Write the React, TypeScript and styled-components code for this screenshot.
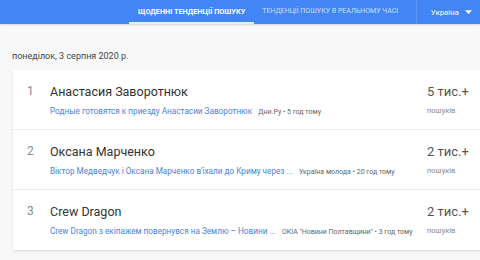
import styled, { createGlobalStyle } from "styled-components";

const GlobalStyle = createGlobalStyle`
    body {
        margin: 0;
        background: #f8f8f8;
        font-family: Roboto, "Noto Sans", Arial, sans-serif;
        overflow: hidden;
    }
`;

const items = [
    {
        rank: 1,
        title: "Анастасия Заворотнюк",
        article: "Родные готовятся к приезду Анастасии Заворотнюк",
        source: "Дни.Ру • 5 год тому",
        count: "5 тис.+",
    },
    {
        rank: 2,
        title: "Оксана Марченко",
        article: "Віктор Медведчук і Оксана Марченко в'їхали до Криму через ...",
        source: "Україна молода • 20 год тому",
        count: "2 тис.+",
    },
    {
        rank: 3,
        title: "Crew Dragon",
        article: "Crew Dragon з екіпажем повернувся на Землю – Новини ...",
        source: "ОКІА \"Новини Полтавщини\" • 3 год тому",
        count: "2 тис.+",
    },
];

const App = () => {
    return (
        <Page>
            <GlobalStyle />
            <Header>
                <Tab active>Щоденні тенденції пошуку</Tab>
                <Tab>Тенденції пошуку в реальному часі</Tab>
                <Region>
                    Україна
                    <svg width="7" height="5" viewBox="0 0 8 5">
                        <path d="M0 0 L8 0 L4 4.5 Z" fill="#ffffff" />
                    </svg>
                </Region>
            </Header>
            <DateLine>понеділок, 3 серпня 2020 р.</DateLine>
            <Card>
                {items.map((item) => (
                    <Row key={item.rank}>
                        <Rank>{item.rank}</Rank>
                        <Details>
                            <Title>{item.title}</Title>
                            <Meta>
                                <ArticleLink>{item.article}</ArticleLink>
                                <Source>{item.source}</Source>
                            </Meta>
                        </Details>
                        <Searches>
                            <Count>{item.count}</Count>
                            <CountLabel>пошуків</CountLabel>
                        </Searches>
                    </Row>
                ))}
            </Card>
        </Page>
    );
};

const Page = styled.div`
    width: 480px;
    height: 260px;
    overflow: hidden;
`;

const Header = styled.div`
    display: flex;
    align-items: stretch;
    height: 24px;
    padding-left: 129px;
    background: #4285f4;
    box-shadow: 0 1px 2px rgba(0, 0, 0, 0.15);
`;

const Tab = styled.div<{ active?: boolean }>`
    display: flex;
    align-items: center;
    padding: ${(p) => (p.active ? "0 9px" : "0 8px")};
    font-size: ${(p) => (p.active ? "7.3px" : "7px")};
    font-weight: ${(p) => (p.active ? 700 : 400)};
    text-transform: uppercase;
    color: ${(p) => (p.active ? "#ffffff" : "rgba(255, 255, 255, 0.75)")};
    border-bottom: 2px solid ${(p) => (p.active ? "#e8eefb" : "transparent")};
    white-space: nowrap;
    box-sizing: border-box;
`;

const Region = styled.div`
    display: flex;
    align-items: center;
    gap: 6px;
    margin-left: auto;
    padding: 0 8px 0 14px;
    border-left: 1px solid rgba(255, 255, 255, 0.15);
    font-size: 7.8px;
    font-weight: 500;
    color: rgba(255, 255, 255, 0.85);
`;

const DateLine = styled.div`
    padding: 27px 0 0 12px;
    height: 19px;
    font-size: 9px;
    color: #444;
`;

const Card = styled.div`
    margin: 0 -6px 0 13px;
    background: #fff;
    box-shadow: 0 1px 2px rgba(0, 0, 0, 0.12);
`;

const Row = styled.div`
    display: flex;
    align-items: flex-start;
    height: 60px;
    box-sizing: border-box;
    border-bottom: 1px solid #ebebeb;

    &:last-child {
        border-bottom: none;
    }
`;

const Rank = styled.div`
    width: 37px;
    padding: 14px 0 0 14px;
    box-sizing: border-box;
    font-size: 12px;
    color: #8a8a8a;
`;

const Details = styled.div`
    flex: 1;
    padding-top: 14px;
`;

const Title = styled.div`
    font-size: 12.5px;
    color: #333;
    line-height: 16px;
`;

const Meta = styled.div`
    display: flex;
    align-items: baseline;
    gap: 6px;
    margin-top: 6px;
    white-space: nowrap;
`;

const ArticleLink = styled.span`
    font-size: 8.2px;
    color: #4d82d6;
`;

const Source = styled.span`
    font-size: 7px;
    color: #666;
`;

const Searches = styled.div`
    width: 59px;
    padding-top: 14px;
`;

const Count = styled.div`
    font-size: 13px;
    line-height: 16px;
    color: #555;
`;

const CountLabel = styled.div`
    margin-top: 6px;
    font-size: 7.5px;
    color: #888;
`;

export default App;
